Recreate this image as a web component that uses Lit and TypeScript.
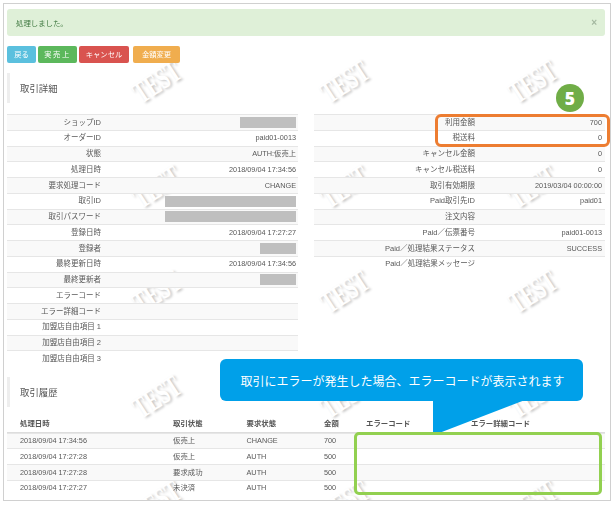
import { LitElement, html, css } from "lit";
import { customElement } from "lit/decorators.js";

type Cell = { label: string; value?: string; mask?: number };

const LEFT: Cell[] = [
  { label: "ショップID", mask: 56 },
  { label: "オーダーID", value: "paid01-0013" },
  { label: "状態", value: "AUTH:仮売上" },
  { label: "処理日時", value: "2018/09/04 17:34:56" },
  { label: "要求処理コード", value: "CHANGE" },
  { label: "取引ID", mask: 131 },
  { label: "取引パスワード", mask: 131 },
  { label: "登録日時", value: "2018/09/04 17:27:27" },
  { label: "登録者", mask: 36 },
  { label: "最終更新日時", value: "2018/09/04 17:34:56" },
  { label: "最終更新者", mask: 36 },
  { label: "エラーコード" },
  { label: "エラー詳細コード" },
  { label: "加盟店自由項目 1" },
  { label: "加盟店自由項目 2" },
  { label: "加盟店自由項目 3" },
];

const RIGHT: Cell[] = [
  { label: "利用金額", value: "700" },
  { label: "税送料", value: "0" },
  { label: "キャンセル金額", value: "0" },
  { label: "キャンセル税送料", value: "0" },
  { label: "取引有効期限", value: "2019/03/04 00:00:00" },
  { label: "Paid取引先ID", value: "paid01" },
  { label: "注文内容" },
  { label: "Paid／伝票番号", value: "paid01-0013" },
  { label: "Paid／処理結果ステータス", value: "SUCCESS" },
  { label: "Paid／処理結果メッセージ" },
];

const HISTORY = [
  ["2018/09/04 17:34:56", "仮売上", "CHANGE", "700"],
  ["2018/09/04 17:27:28", "仮売上", "AUTH", "500"],
  ["2018/09/04 17:27:28", "要求成功", "AUTH", "500"],
  ["2018/09/04 17:27:27", "未決済", "AUTH", "500"],
];

const MARKS: [number, number][] = [];
for (const y of [82, 187, 292, 397, 502]) {
  for (const x of [157, 345, 533]) MARKS.push([x, y]);
}

@customElement("app-root")
export class AppRoot extends LitElement {
  static styles = css`
    :host {
      display: block;
      width: 615px;
      height: 505px;
      background: #fff;
      overflow: hidden;
      font-family: "Liberation Sans", "Noto Sans CJK JP", sans-serif;
      color: #585858;
    }
    .stage {
      position: relative;
      width: 615px;
      height: 505px;
      overflow: hidden;
    }
    .frame {
      position: relative;
      box-sizing: border-box;
      margin: 3px 0 0 3px;
      width: 608px;
      height: 498px;
      border: 1px solid #d0d0d0;
      padding: 5px 5px 0 3px;
      overflow: hidden;
    }
    .marks {
      position: absolute;
      inset: 0;
    }
    .mark {
      position: absolute;
      width: 80px;
      margin: -16px 0 0 -40px;
      text-align: center;
      font-family: "Liberation Serif", serif;
      font-weight: 700;
      font-size: 31px;
      line-height: 32px;
      color: #fff;
      -webkit-text-stroke: 1.5px #fff;
      paint-order: stroke fill;
      text-shadow: 2px 2px 3px #c4c4c4;
      transform: rotate(-33deg) scaleX(0.64);
    }
    .content {
      position: relative;
      filter: blur(0.25px);
    }
    .alert {
      display: flex;
      align-items: center;
      justify-content: space-between;
      height: 27px;
      box-sizing: border-box;
      padding: 0 8px 0 9px;
      background: #dff0d8;
      border-radius: 3px;
      color: #3c763d;
      font-size: 7.4px;
    }
    .close {
      color: #a4b8a0;
      font-size: 10px;
      font-weight: 700;
    }
    .buttons {
      display: flex;
      gap: 2px;
      margin-top: 10px;
      height: 17px;
    }
    .btn {
      display: flex;
      align-items: center;
      justify-content: center;
      border-radius: 2px;
      color: #fff;
      font-size: 7.3px;
      line-height: 1;
    }
    .b1 { width: 29px; background: #5bc0de; }
    .b2 { width: 39px; background: #5cb85c; letter-spacing: 1.6px; }
    .b3 { width: 50px; background: #d9534f; margin-right: 2px; }
    .b4 { width: 47px; background: #f0ad4e; }
    .title {
      height: 30px;
      box-sizing: border-box;
      border-left: 3px solid #eee;
      padding-left: 10px;
      display: flex;
      align-items: center;
      font-size: 9.4px;
      color: #555;
    }
    .t1 { margin-top: 10px; }
    .t2 { margin-top: 11px; }
    .cols {
      display: flex;
      justify-content: space-between;
      margin-top: 11px;
    }
    .side {
      width: 291px;
    }
    .row {
      display: flex;
      align-items: center;
      justify-content: space-between;
      box-sizing: border-box;
      height: 15.75px;
      border-top: 1px solid #e6e6e6;
      font-size: 7.5px;
      line-height: 1;
    }
    .side .row:nth-child(odd),
    .hist .row:nth-child(even) {
      background: #f9f9f9;
    }
    .label {
      flex: none;
      text-align: right;
    }
    .left .label { width: 94px; }
    .right .label { width: 161px; }
    .value {
      flex: 1;
      display: flex;
      justify-content: flex-end;
      white-space: nowrap;
    }
    .left .value { padding-right: 2px; }
    .right .value { padding-right: 3px; }
    .num {
      font-size: 7.3px;
    }
    .mask {
      display: block;
      height: 11px;
      background: #bfbfbf;
    }
    .hist {
      margin-top: 8px;
    }
    .hist .row {
      display: grid;
      grid-template-columns: 153px 73.5px 77.5px 42px 105px 1fr;
      justify-content: stretch;
      padding-left: 13px;
      font-size: 7.4px;
    }
    .hist .row > span {
      white-space: nowrap;
    }
    .hist .head {
      border-top: 0;
      border-bottom: 1px solid #ddd;
      height: 17.5px;
      color: #555;
      font-weight: 700;
    }
    .hist .head:nth-child(even) {
      background: transparent;
    }
    .callout {
      position: absolute;
      left: 220px;
      top: 359px;
      width: 363px;
      height: 42px;
      box-sizing: border-box;
      padding-left: 2px;
      background: #00a0e9;
      border-radius: 6px;
      color: #fff;
      font-size: 12px;
      display: flex;
      align-items: center;
      justify-content: center;
      white-space: nowrap;
    }
    .tail {
      position: absolute;
      left: 433px;
      top: 400px;
      display: block;
    }
    .green {
      position: absolute;
      box-sizing: border-box;
      left: 354px;
      top: 432px;
      width: 248px;
      height: 63px;
      border: 3px solid #92d050;
      border-radius: 5px;
    }
    .orange {
      position: absolute;
      box-sizing: border-box;
      left: 435px;
      top: 114px;
      width: 175px;
      height: 33px;
      border: 3px solid #ed7d31;
      border-radius: 6px;
    }
    .badge {
      position: absolute;
      left: 556px;
      top: 84px;
      width: 28px;
      height: 28px;
      border-radius: 50%;
      background: #70ad47;
      color: #fff;
      font-family: "Open Sans", "Liberation Sans", sans-serif;
      font-weight: 800;
      font-size: 17.5px;
      display: flex;
      align-items: center;
      justify-content: center;
    }
  `;

  private cell(c: Cell) {
    let v: unknown = "";
    if (c.mask) {
      v = html`<span class="mask" style="width:${c.mask}px"></span>`;
    } else if (c.value) {
      v = html`<span class="num">${c.value}</span>`;
    }
    return html`<div class="row">
      <span class="label">${c.label}</span>
      <span class="value">${v}</span>
    </div>`;
  }

  render() {
    return html`
      <div class="stage">
        <div class="frame">
          <div class="marks">
            ${MARKS.map(
              ([x, y]) =>
                html`<span class="mark" style="left:${x - 4}px;top:${y - 4}px">TEST</span>`
            )}
          </div>
          <div class="content">
            <div class="alert"><span>処理しました。</span><span class="close">×</span></div>
            <div class="buttons">
              <span class="btn b1">戻る</span>
              <span class="btn b2">実売上</span>
              <span class="btn b3">キャンセル</span>
              <span class="btn b4">金額変更</span>
            </div>
            <div class="title t1">取引詳細</div>
            <div class="cols">
              <div class="side left">${LEFT.map((c) => this.cell(c))}</div>
              <div class="side right">${RIGHT.map((c) => this.cell(c))}</div>
            </div>
            <div class="title t2">取引履歴</div>
            <div class="hist">
              <div class="row head">
                <span>処理日時</span><span>取引状態</span><span>要求状態</span><span>金額</span><span>エラーコード</span><span>エラー詳細コード</span>
              </div>
              ${HISTORY.map(
                (r) => html`<div class="row">
                  <span class="num">${r[0]}</span><span>${r[1]}</span><span class="num">${r[2]}</span><span class="num">${r[3]}</span><span></span><span></span>
                </div>`
              )}
            </div>
          </div>
        </div>
        <div class="orange"></div>
        <div class="badge">5</div>
        <div class="callout">取引にエラーが発生した場合、エラーコードが表示されます</div>
        <svg class="tail" width="92" height="36" viewBox="0 0 92 36">
          <polygon points="0,0 92,0 1,35 0,35" fill="#00a0e9"></polygon>
        </svg>
        <div class="green"></div>
      </div>
    `;
  }
}
